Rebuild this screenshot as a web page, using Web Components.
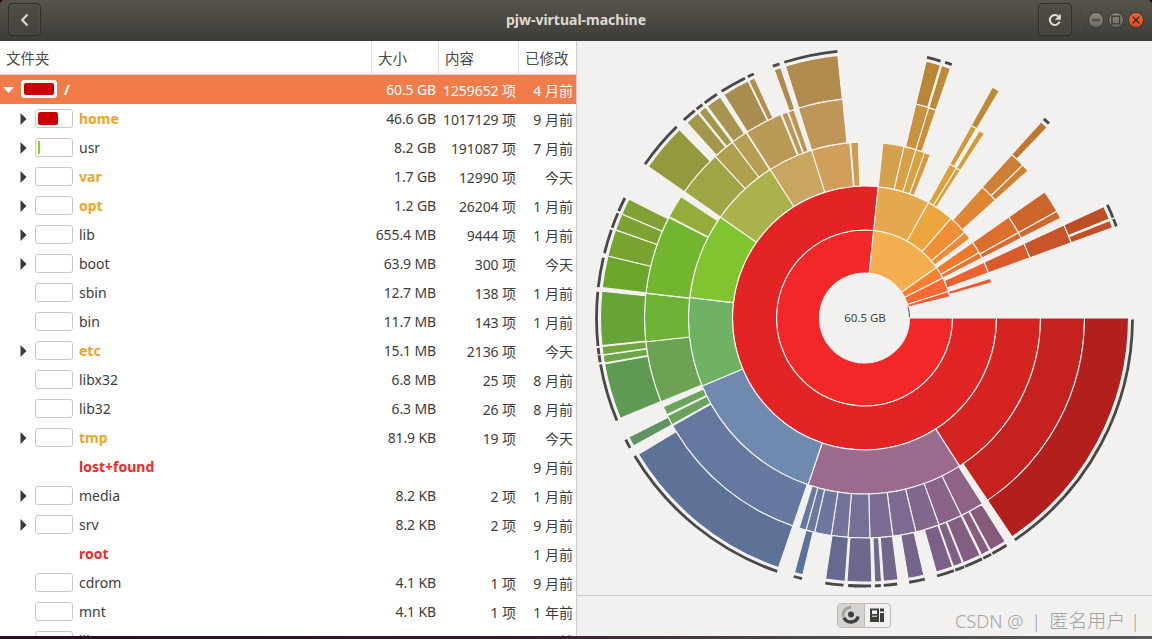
<!DOCTYPE html>
<html lang="zh">
<head>
<meta charset="utf-8">
<title>pjw-virtual-machine</title>
<style>
html,body{margin:0;padding:0;height:639px;overflow:hidden;background:#f2f1f0}
body{font-family:"Noto Sans","Noto Sans CJK SC",sans-serif}
</style>
</head>
<body>
<app-window>
  <title-bar slot="top" heading="pjw-virtual-machine"></title-bar>
  <usage-tree slot="left">
    <usage-row root open bar="100" barcolor="#cc0000" name="/" size="60.5 GB" count="1259652 项" age="4 月前"></usage-row>
    <usage-row arrow tone="warm" bar="62" barcolor="#cc0000" name="home" size="46.6 GB" count="1017129 项" age="9 月前"></usage-row>
    <usage-row arrow bar="5" barcolor="#7fd02a" name="usr" size="8.2 GB" count="191087 项" age="7 月前"></usage-row>
    <usage-row arrow tone="warm" name="var" size="1.7 GB" count="12990 项" age="今天"></usage-row>
    <usage-row arrow tone="warm" name="opt" size="1.2 GB" count="26204 项" age="1 月前"></usage-row>
    <usage-row arrow name="lib" size="655.4 MB" count="9444 项" age="1 月前"></usage-row>
    <usage-row arrow name="boot" size="63.9 MB" count="300 项" age="今天"></usage-row>
    <usage-row name="sbin" size="12.7 MB" count="138 项" age="1 月前"></usage-row>
    <usage-row name="bin" size="11.7 MB" count="143 项" age="1 月前"></usage-row>
    <usage-row arrow tone="warm" name="etc" size="15.1 MB" count="2136 项" age="今天"></usage-row>
    <usage-row name="libx32" size="6.8 MB" count="25 项" age="8 月前"></usage-row>
    <usage-row name="lib32" size="6.3 MB" count="26 项" age="8 月前"></usage-row>
    <usage-row arrow tone="warm" name="tmp" size="81.9 KB" count="19 项" age="今天"></usage-row>
    <usage-row nobar tone="hot" name="lost+found" age="9 月前"></usage-row>
    <usage-row arrow name="media" size="8.2 KB" count="2 项" age="1 月前"></usage-row>
    <usage-row arrow name="srv" size="8.2 KB" count="2 项" age="9 月前"></usage-row>
    <usage-row nobar tone="hot" name="root" age="1 月前"></usage-row>
    <usage-row name="cdrom" size="4.1 KB" count="1 项" age="9 月前"></usage-row>
    <usage-row name="mnt" size="4.1 KB" count="1 项" age="1 年前"></usage-row>
    <usage-row name="lib64" size="4.1 KB" count="1 项" age="1 月前"></usage-row>
  </usage-tree>
  <ring-chart slot="chart" label="60.5 GB"></ring-chart>
  <chart-footer slot="footer"></chart-footer>
</app-window>
<script>
function shadow(el, html){ el.attachShadow({mode:'open'}).innerHTML = html; return el.shadowRoot; }

customElements.define('app-window', class extends HTMLElement{
  connectedCallback(){ if(this.shadowRoot) return; shadow(this,`<style>
    :host{display:flex;flex-direction:column;width:1152px;height:639px;overflow:hidden;position:relative;background:#2c0a22}
    .main{flex:1;display:flex;min-height:0;background:#f2f1f0}
    .left{width:576px;flex:none;background:#fff;border-right:1px solid #cfcdca;overflow:hidden}
    .right{flex:1;display:flex;flex-direction:column;min-width:0}
    .chart{flex:1;min-height:0;display:flex}
    .strip{height:3px;flex:none;background:linear-gradient(90deg,#2c0a22 0,#3a1a30 45%,#4a4a48 70%,#5a5a58 100%)}
  </style>
  <slot name="top"></slot>
  <div class="main">
    <div class="left"><slot name="left"></slot></div>
    <div class="right"><div class="chart"><slot name="chart"></slot></div><slot name="footer"></slot></div>
  </div>
  <div class="strip"></div>`); }
});

customElements.define('title-bar', class extends HTMLElement{
  connectedCallback(){ if(this.shadowRoot) return; shadow(this,`<style>
    :host{display:grid;grid-template-columns:1fr auto 1fr;align-items:center;height:41px;flex:none;box-sizing:border-box;padding:0 8px 2px 8px;
      background:linear-gradient(#58544b,#3d3c37);border-radius:5px 5px 0 0}
    .side{display:flex;align-items:center}
    .side.r{justify-content:flex-end}
    .btn{width:33px;height:33px;box-sizing:border-box;border:1px solid #2f2e2b;border-radius:4px;display:flex;align-items:center;justify-content:center;
      background:linear-gradient(#4f4c45,#45433d);box-shadow:inset 0 0 0 1px rgba(255,255,255,.03)}
    .r .btn{width:34px}
    .t{text-align:center;font:700 14px "Noto Sans",sans-serif;color:#dfdbd2}
    .sep{width:1px;height:30px;background:#4a4843;margin:0 7px 0 8px}
    .dot{width:16px;height:16px;border-radius:50%;display:flex;align-items:center;justify-content:center;background:linear-gradient(#8a8780,#6a6862);border:1px solid #3a3935;box-sizing:border-box;margin-left:4px}
    .dot.x{background:linear-gradient(#f0683c,#df4a1c)}
    .dot.first{margin-left:0}
  </style>
  <div class="side"><div class="btn"><svg width="16" height="16" viewBox="0 0 16 16"><path d="M10.5 2.6 5.2 8l5.3 5.4" fill="none" stroke="#d9d6cf" stroke-width="2.2"/></svg></div></div>
  <div class="t">${this.getAttribute('heading')}</div>
  <div class="side r">
  <div class="btn"><svg width="16" height="16" viewBox="0 0 16 16"><path d="M12.6 9.6A5 5 0 1 1 11.6 4.6" fill="none" stroke="#e2dfd8" stroke-width="2"/><path d="M13.8 1.8v6h-6z" fill="#e2dfd8"/></svg></div>
  <div class="sep"></div>
  <div class="dot first"><svg width="10" height="10" viewBox="0 0 10 10"><path d="M1 5h8" stroke="#3c3b37" stroke-width="1.4"/></svg></div>
  <div class="dot"><svg width="10" height="10" viewBox="0 0 10 10"><rect x="1" y="1.2" width="7.6" height="7.6" fill="none" stroke="#3c3b37" stroke-width="1.3"/></svg></div>
  <div class="dot x"><svg width="10" height="10" viewBox="0 0 10 10"><path d="M1.8 1.8l6.4 6.4M8.2 1.8 1.8 8.2" stroke="#3c2a20" stroke-width="1.4"/></svg></div>
  </div>`); }
});

customElements.define('usage-tree', class extends HTMLElement{
  connectedCallback(){ if(this.shadowRoot) return; shadow(this,`<style>
    :host{display:block;font:14px "Noto Sans","Noto Sans CJK SC",sans-serif;color:#3d3d3d}
    .head{display:grid;grid-template-columns:371px 67px 80px 58px;height:34px;box-sizing:border-box;border-bottom:1px solid #d8d6d3;background:#fff;font-size:14.5px;color:#4a4a4a}
    .head div{display:flex;align-items:center;padding:0 6px 1px 6px;border-left:1px solid #e2e0dd;white-space:nowrap}
    .head div:first-child{border-left:0;padding-left:6px}
  </style>
  <div class="head"><div>文件夹</div><div>大小</div><div>内容</div><div>已修改</div></div>
  <slot></slot>`); }
});

customElements.define('usage-row', class extends HTMLElement{
  connectedCallback(){ if(this.shadowRoot) return;
    const a=n=>this.getAttribute(n)||'', h=n=>this.hasAttribute(n);
    const root=h('root');
    const tone={warm:'#f0a51e',hot:'#ef2929'}[a('tone')]||(root?'#fff':'#3d3d3d');
    const bold=a('tone')||root?'700':'400';
    const tri= root ? `<svg width="11" height="6" viewBox="0 0 11 6"><path d="M0 0h11L5.5 6z" fill="#fff"/></svg>`
      : h('arrow') ? `<svg width="7" height="12" viewBox="0 0 7 12"><path d="M0.5 0 6.5 6l-6 6z" fill="#3a3a3a"/></svg>` : '';
    const bar = h('nobar') ? '<span class="bar none"></span>' :
      `<span class="bar"><i style="width:${a('bar')||0}%;background:${a('barcolor')||'transparent'}"></i></span>`;
    shadow(this,`<style>
    :host{display:grid;grid-template-columns:371px 66px 80px 58px;height:29px;align-items:center;white-space:nowrap;
      background:${root?'#f27b4a':'transparent'};color:${root?'#fff':'#3d3d3d'}}
    .n{display:flex;align-items:center;padding-left:${root?3:20}px;height:100%}
    .e{width:${root?11:7}px;flex:none;display:flex;margin-right:${root?7:8}px}
    .bar{width:${root?36:38}px;height:${root?18:19}px;box-sizing:border-box;flex:none;border:1px solid ${root?'#fff':'#c9c9c9'};border-radius:3px;background:#fff;padding:2px;display:flex;margin-top:-1px}
    .bar.none{border-color:transparent;background:transparent}
    .bar i{display:block;border-radius:2px;height:100%}
    .l{margin-left:${root?7:6}px;font-weight:${bold};color:${tone}}
    .s,.c,.a{text-align:right}
    .s{padding-right:1px;letter-spacing:-.12px}.c{padding-right:1px;letter-spacing:-.08px}.a{padding-right:2px}
    </style>
    <div class="n"><span class="e">${tri}</span>${bar}<span class="l">${a('name')}</span></div>
    <div class="s">${a('size')}</div><div class="c">${a('count')}</div><div class="a">${a('age')}</div>`);
  }
});

customElements.define('ring-chart', class extends HTMLElement{
  connectedCallback(){ if(this.shadowRoot) return;
    const R=[45,88,132,176,220,264], C=287.5, Y=277;
    const pt=(r,a)=>{const t=a*Math.PI/180;return (C+r*Math.cos(t)).toFixed(2)+' '+(Y+r*Math.sin(t)).toFixed(2)};
    const seg=(i,s,e,c)=>{const r0=R[i],r1=R[i+1],l=(e-s)>180?1:0;
      return `<path fill="${c}" d="M${pt(r0,s)}L${pt(r1,s)}A${r1} ${r1} 0 ${l} 1 ${pt(r1,e)}L${pt(r0,e)}A${r0} ${r0} 0 ${l} 0 ${pt(r0,s)}Z"/>`};
    const arc=(s,e,r=268)=>`<path d="M${pt(r,s)}A${r} ${r} 0 ${(e-s)>180?1:0} 1 ${pt(r,e)}"/>`;
    const S=[
      [0,0,276,'#f22828'],[0,276,325,'#f4b050'],[0,325,333,'#f98030'],[0,333,342.5,'#fa6a33'],[0,342.5,346,'#f5592f'],
      [1,0,276,'#e32424'],[1,276,299,'#e5a84f'],[1,299,311,'#eca63e'],[1,311,319.5,'#f08f35'],[1,319.5,323,'#ee8a33'],
      [1,325,330.3,'#eb7a2e'],[1,330.3,333,'#e97330'],[1,335,340,'#ea6230'],[1,342.5,344.5,'#ee5a30'],
      [2,0,57.3,'#d42320'],[2,57.3,108.7,'#9b6a8d'],[2,108.7,157.3,'#708aaf'],[2,157.3,186.7,'#70b263'],[2,186.7,215,'#80c430'],
      [2,215,237.6,'#a9b24b'],[2,237.6,252.5,'#c8a660'],[2,252.5,265.2,'#d09f5a'],[2,265.5,268,'#cf9b50'],
      [2,276,283,'#d4a04e'],[2,283,287,'#d89f45'],[2,287,290,'#d9a040'],[2,290,292,'#d69a3c'],
      [2,299,301.5,'#dda03c'],[2,301.5,303,'#d9a03a'],[2,312,318,'#de8634'],[2,325,331,'#dc6f2e'],[2,331,333,'#d96a2d'],[2,335,340,'#d95b2c'],
      [3,0,56,'#c5211e'],[3,57.6,63.9,'#8f6385'],[3,63.9,70.2,'#896488'],[3,70.2,76.5,'#82678c'],[3,76.5,82.6,'#7c6a90'],[3,82.6,88.6,'#7b6c93'],
      [3,88.6,94.3,'#786f97'],[3,94.3,98.7,'#747399'],[3,98.7,103.1,'#6e769d'],[3,103.1,105.4,'#6b78a0'],[3,105.4,107.3,'#6778a1'],
      [3,109,150.7,'#6678a0'],[3,151,153.6,'#6aa25e'],[3,153.9,156.2,'#6ba55a'],[3,157.6,173.8,'#6ba353'],[3,173.8,186.5,'#6db136'],
      [3,186.5,207.2,'#72b52f'],[3,207.4,213.5,'#93ac3a'],[3,215,227.3,'#9ea544'],[3,227.3,233.1,'#afa04e'],[3,233.1,237.4,'#b5a052'],
      [3,237.6,247.6,'#b89a55'],[3,247.9,249.5,'#ba9758'],[3,249.7,251.3,'#bb9755'],[3,252.5,264.3,'#bf9558'],
      [3,283.5,287,'#c8923f'],[3,287,289,'#c99038'],[3,299,300.6,'#d29a38'],[3,301.5,303,'#d49a36'],[3,312,316,'#ce7f33'],[3,316,318,'#cf8030'],
      [3,325,331,'#cc662b'],[3,331,333,'#ce6a2e'],[3,335,340,'#c8552a'],
      [4,0,56,'#b21f1c'],[4,57.8,61.5,'#855a7b'],[4,61.7,63.7,'#875d80'],[4,64,68,'#815e82'],[4,68.2,70.3,'#7f6085'],[4,70.5,74.2,'#7b6187'],
      [4,77,80.5,'#756489'],[4,82.7,85.9,'#72668b'],[4,86.3,87.8,'#6f698e'],[4,88.4,93.8,'#6c698d'],[4,94.2,98.5,'#676a90'],
      [4,103.5,105.4,'#5e7298'],[4,109,148.9,'#5e7298'],[4,151,153.2,'#5e9460'],[4,157.7,170,'#5f9a52'],[4,170.2,171.9,'#6ea548'],[4,172,173.8,'#71a63f'],
      [4,174,185.8,'#66a437'],[4,186.6,193.6,'#6ca72b'],[4,193.6,199.5,'#78a32f'],[4,199.5,203.2,'#7ba233'],[4,203.2,206.8,'#80a135'],
      [4,215,225.5,'#939a3e'],[4,227.7,230.9,'#a39849'],[4,231.2,233,'#a6964b'],[4,233.4,236.9,'#a69450'],[4,237.8,243.8,'#a78e50'],[4,244,245.4,'#b08f50'],
      [4,250,251.5,'#b08a4e'],[4,252.6,264.2,'#b18a4e'],[4,283.5,286.7,'#b98538'],[4,287,289,'#bc8a38'],[4,299,300.7,'#be8a35'],[4,312,313.8,'#c0782e'],
      [4,335,338,'#ba4e25'],[4,338.3,340,'#bf5028']
    ];
    const M=[[0.3,55.9],[58,61.5],[61.8,63.7],[64,68],[68.2,70.2],[70.5,74.3],[77,80.4],[83,85.9],[86.5,87.8],[88.6,93.5],[94.5,98.4],[103.5,105.3],
      [109,149],[151,153],[157.5,170],[170.5,172],[172.2,173.6],[174,185.6],[186.6,193],[194,199.2],[199.7,203],[203.5,206.6],[215,225.5],
      [227.6,230.7],[231.2,232.8],[233.4,236.6],[237.8,243.5],[244.2,245.6],[250,251.5],[252.6,264.2],[283.5,286.5],[287.5,289],[312,313.5],[335,338],[338.3,340]];
    shadow(this,`<style>
      :host{display:block;width:100%;height:100%;position:relative}
      svg{display:block;width:575px;height:554px}
      text{font:11.5px "Noto Sans",sans-serif;fill:#444;text-anchor:middle}
    </style>
    <svg viewBox="0 0 575 554">
      <g stroke="#f5f4f3" stroke-width="1.1" stroke-linejoin="round">${S.map(s=>seg(...s)).join('')}</g>
      <g fill="none" stroke="#484848" stroke-width="2.8">${M.map(m=>arc(m[0],m[1])).join('')}</g>
      <g fill="none" stroke="#555" stroke-width="1">${arc(346,359,45)}</g>
      <text x="${C+0.5}" y="${Y+4}">${this.getAttribute('label')}</text>
    </svg>`);
  }
});

customElements.define('chart-footer', class extends HTMLElement{
  connectedCallback(){ if(this.shadowRoot) return; shadow(this,`<style>
    :host{display:flex;justify-content:center;align-items:center;height:41px;flex:none;box-sizing:border-box;border-top:1px solid #cfcdca;background:#f2f1f0;position:relative;padding:0 0 2px 0}
    .seg{display:flex;height:25px;width:54px;box-sizing:border-box;border:1px solid #bdbab5;border-radius:4px;overflow:hidden;margin-left:-1px}
    .seg span{flex:1;display:flex;align-items:center;justify-content:center}
    .seg .on{background:#d6d4d0;border-right:1px solid #bdbab5}
    .wm{position:absolute;left:378px;top:12px;display:flex;align-items:center;font:300 18.2px/26px "Noto Sans","Noto Sans CJK SC",sans-serif;color:#a2a2a2;white-space:nowrap}
    .wm b{font-weight:300;font-size:19px;margin:0 5px 0 8px}
    .wm u{text-decoration:none}
  </style>
  <div class="seg">
    <span class="on"><svg width="20" height="20" viewBox="0 0 20 20"><path d="M10 2.2A7.8 7.8 0 0 0 2.4 12" fill="none" stroke="#a5a3a0" stroke-width="3"/><path d="M3 12.6a7.6 7.6 0 0 0 14.2-1" fill="none" stroke="#3e3e3c" stroke-width="3.4"/><circle cx="10" cy="9.6" r="3" fill="#3e3e3c"/></svg></span>
    <span><svg width="16" height="16" viewBox="0 0 16 16"><rect x="1" y="1.5" width="9" height="13.5" fill="#3e3e3c"/><rect x="3" y="3.4" width="5" height="3.6" fill="#f2f1f0"/><rect x="3" y="8.6" width="5" height="1.4" fill="#bbb"/><rect x="11" y="1.5" width="4" height="3" fill="#3e3e3c"/><rect x="11" y="6" width="4" height="9" fill="#3e3e3c"/></svg></span>
  </div>
  <div class="wm"><u>CSDN @</u><u style="margin-left:8px">|</u><b>匿名用户</b><u>|</u></div>`); }
});
</script>
</body>
</html>
